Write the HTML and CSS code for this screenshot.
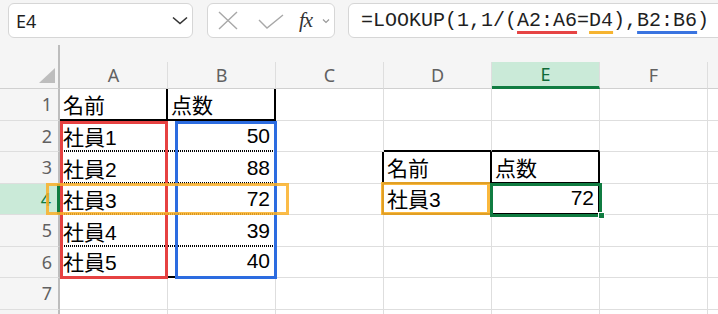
FILE: index.html
```html
<!DOCTYPE html>
<html lang="ja">
<head>
    <meta charset="UTF-8">
    <title>LOOKUP</title>
    <link rel="stylesheet" href="styles.css">
</head>
<body>
    <!-- 数式バー -->
    <div class="toolbar">
        <div class="namebox">
            <span>E4</span>
            <svg width="16" height="9" viewBox="0 0 16 9"><path d="M1 1.5 L8 7.5 L15 1.5" fill="none" stroke="#333" stroke-width="1.6"/></svg>
        </div>
        <div class="fxbox">
            <svg class="ico-x" width="20" height="19" viewBox="0 0 20 19"><path d="M1 1 L19 18 M19 1 L1 18" fill="none" stroke="#a8a8a8" stroke-width="1.4"/></svg>
            <svg class="ico-ok" width="26" height="15" viewBox="0 0 26 15"><path d="M1 6 L9 14 L25 1" fill="none" stroke="#a8a8a8" stroke-width="1.4"/></svg>
            <span class="fx">fx</span>
            <svg class="ico-dd" width="8" height="6" viewBox="0 0 8 6"><path d="M1 1.5 L4 4.5 L7 1.5" fill="none" stroke="#9a9a9a" stroke-width="1.2"/></svg>
        </div>
        <div class="formula">=LOOKUP(1,1/(<span class="ref ref-red">A2:A6</span>=<span class="ref ref-orange">D4</span>),<span class="ref ref-blue">B2:B6</span>)</div>
    </div>

    <!-- シート -->
    <div class="sheet">
        <div class="corner"><div class="tri"></div></div>
        <div class="colhead">A</div>
        <div class="colhead">B</div>
        <div class="colhead">C</div>
        <div class="colhead">D</div>
        <div class="colhead active">E</div>
        <div class="colhead">F</div>
        <div class="colhead"></div>

        <div class="rowhead">1</div>
        <div class="cell r-k b-k">名前</div>
        <div class="cell r-k b-k">点数</div>
        <div class="cell"></div>
        <div class="cell"></div>
        <div class="cell"></div>
        <div class="cell"></div>
        <div class="cell"></div>

        <div class="rowhead">2</div>
        <div class="cell r-k b-dot">社員1</div>
        <div class="cell num r-k b-dot">50</div>
        <div class="cell"></div>
        <div class="cell b-k"></div>
        <div class="cell b-k"></div>
        <div class="cell"></div>
        <div class="cell"></div>

        <div class="rowhead">3</div>
        <div class="cell r-k b-dot">社員2</div>
        <div class="cell num r-k b-dot">88</div>
        <div class="cell r-k"></div>
        <div class="cell r-k b-k">名前</div>
        <div class="cell r-k b-k">点数</div>
        <div class="cell"></div>
        <div class="cell"></div>

        <div class="rowhead active">4</div>
        <div class="cell r-k b-dot">社員3</div>
        <div class="cell num r-k b-dot">72</div>
        <div class="cell r-k"></div>
        <div class="cell r-k b-k">社員3</div>
        <div class="cell num r-k b-k">72</div>
        <div class="cell"></div>
        <div class="cell"></div>

        <div class="rowhead">5</div>
        <div class="cell r-k b-dot">社員4</div>
        <div class="cell num r-k b-dot">39</div>
        <div class="cell"></div>
        <div class="cell"></div>
        <div class="cell"></div>
        <div class="cell"></div>
        <div class="cell"></div>

        <div class="rowhead">6</div>
        <div class="cell r-k b-k">社員5</div>
        <div class="cell num r-k b-k">40</div>
        <div class="cell"></div>
        <div class="cell"></div>
        <div class="cell"></div>
        <div class="cell"></div>
        <div class="cell"></div>

        <div class="rowhead">7</div>
        <div class="cell"></div>
        <div class="cell"></div>
        <div class="cell"></div>
        <div class="cell"></div>
        <div class="cell"></div>
        <div class="cell"></div>
        <div class="cell"></div>

        <div class="rowhead"></div>
        <div class="cell"></div>
        <div class="cell"></div>
        <div class="cell"></div>
        <div class="cell"></div>
        <div class="cell"></div>
        <div class="cell"></div>
        <div class="cell"></div>

        <!-- 参照範囲の枠 -->
        <div class="range range-red"></div>
        <div class="range range-blue"></div>
        <div class="range range-orange-a"></div>
        <div class="range range-orange-d"></div>
        <div class="selection"></div>
        <div class="handle"></div>
    </div>
</body>
</html>
```

FILE: styles.css
```css
body {
    margin: 0;
    width: 718px;
    height: 314px;
    overflow: hidden;
    background: #f5f5f5;
    font-family: "Liberation Sans", "Noto Sans CJK JP", sans-serif;
}

/* 数式バー */
.toolbar {
    display: flex;
    align-items: flex-start;
    height: 45px;
    box-sizing: border-box;
    padding: 3px 0 0 8px;
}

.namebox,
.fxbox,
.formula {
    flex: none;
    height: 35px;
    box-sizing: border-box;
    border: 1px solid #d6d6d6;
    border-radius: 6px;
    background: #fff;
    display: flex;
    align-items: center;
}

.namebox {
    width: 185px;
    justify-content: space-between;
    padding: 0 4px 0 7px;
    font-family: "Noto Sans", sans-serif;
    font-size: 18px;
    color: #1f1f1f;
}

.fxbox {
    width: 128px;
    margin-left: 14px;
    padding-left: 10px;
}

.ico-ok {
    margin-left: 20px;
    margin-top: 2px;
}

.fx {
    margin-left: 15px;
    font-family: "Liberation Serif", serif;
    font-style: italic;
    font-size: 21px;
    color: #333;
    letter-spacing: -1px;
}

.ico-dd {
    margin-left: 10px;
}

.formula {
    width: 400px;
    margin-left: 13px;
    padding-left: 12px;
    font-family: "Liberation Mono", monospace;
    font-size: 20px;
    color: #1f1f1f;
}

.ref {
    text-decoration: underline;
    text-decoration-thickness: 3px;
    text-underline-offset: 5px;
}

.ref-red { text-decoration-color: #e64444; }
.ref-orange { text-decoration-color: #f6b430; }
.ref-blue { text-decoration-color: #3a74e0; }

/* シート */
.sheet {
    position: relative;
    display: grid;
    grid-template-columns: 60px repeat(7, 108px);
    grid-template-rows: 44px repeat(8, 31.5px);
}

.corner {
    background: #f5f5f5;
    border-right: 2px solid #bdbdbd;
    border-bottom: 1px solid #d0d0d0;
    display: flex;
    justify-content: flex-end;
    align-items: flex-end;
    padding: 0 3px 5px 0;
}

.tri {
    width: 16px;
    height: 15px;
    background: #bdbdbd;
    clip-path: polygon(100% 0, 100% 100%, 0 100%);
}

.colhead {
    margin-top: 17px;
    background: #f5f5f5;
    border-right: 1px solid #dedede;
    border-bottom: 1px solid #d0d0d0;
    display: flex;
    justify-content: center;
    align-items: center;
    font-family: "Noto Sans", sans-serif;
    font-size: 18px;
    color: #616161;
}

.colhead.active {
    background: #caead8;
    border-bottom: 3px solid #107c41;
    color: #0f6a38;
}

.rowhead {
    background: #f5f5f5;
    border-right: 2px solid #bdbdbd;
    border-bottom: 1px solid #dedede;
    display: flex;
    justify-content: flex-end;
    align-items: center;
    padding-right: 6px;
    font-family: "Noto Sans", sans-serif;
    font-size: 18px;
    color: #616161;
}

.rowhead.active {
    background: #caead8;
    border-right: 3px solid #107c41;
    color: #107c41;
}

.cell {
    background: #fff;
    border-right: 1px solid #dedede;
    border-bottom: 1px solid #dedede;
    display: flex;
    align-items: center;
    padding: 0 4px 0 3px;
    font-size: 21px;
    color: #000;
    white-space: nowrap;
}

.num {
    justify-content: flex-end;
}

.r-k { border-right: 2px solid #000; }
.b-k { border-bottom: 2px solid #000; }

.b-dot {
    border-bottom: 0;
    background: repeating-linear-gradient(90deg, #000 0 1px, transparent 1px 2px) left bottom / 100% 2px no-repeat, #fff;
}

/* 参照範囲 */
.range {
    position: absolute;
    box-sizing: border-box;
    border: 3px solid;
}

.range-red {
    left: 60px;
    top: 76px;
    width: 108px;
    height: 158px;
    border-color: #e64141;
}

.range-blue {
    left: 175px;
    top: 76px;
    width: 102px;
    height: 158px;
    border-color: #2c6ce0;
}

.range-orange-a {
    left: 46px;
    top: 138px;
    width: 243px;
    height: 32px;
    border-color: rgba(250, 176, 40, 0.85);
}

.range-orange-d {
    left: 381px;
    top: 137px;
    width: 109px;
    height: 33px;
    border-color: rgba(250, 176, 40, 0.9);
}

.selection {
    position: absolute;
    left: 490px;
    top: 138px;
    width: 112px;
    height: 34px;
    box-sizing: border-box;
    border: 3px solid #107c41;
}

.handle {
    position: absolute;
    left: 598px;
    top: 167px;
    width: 7px;
    height: 7px;
    background: #107c41;
    border: 1px solid #fff;
    box-sizing: border-box;
}
```
